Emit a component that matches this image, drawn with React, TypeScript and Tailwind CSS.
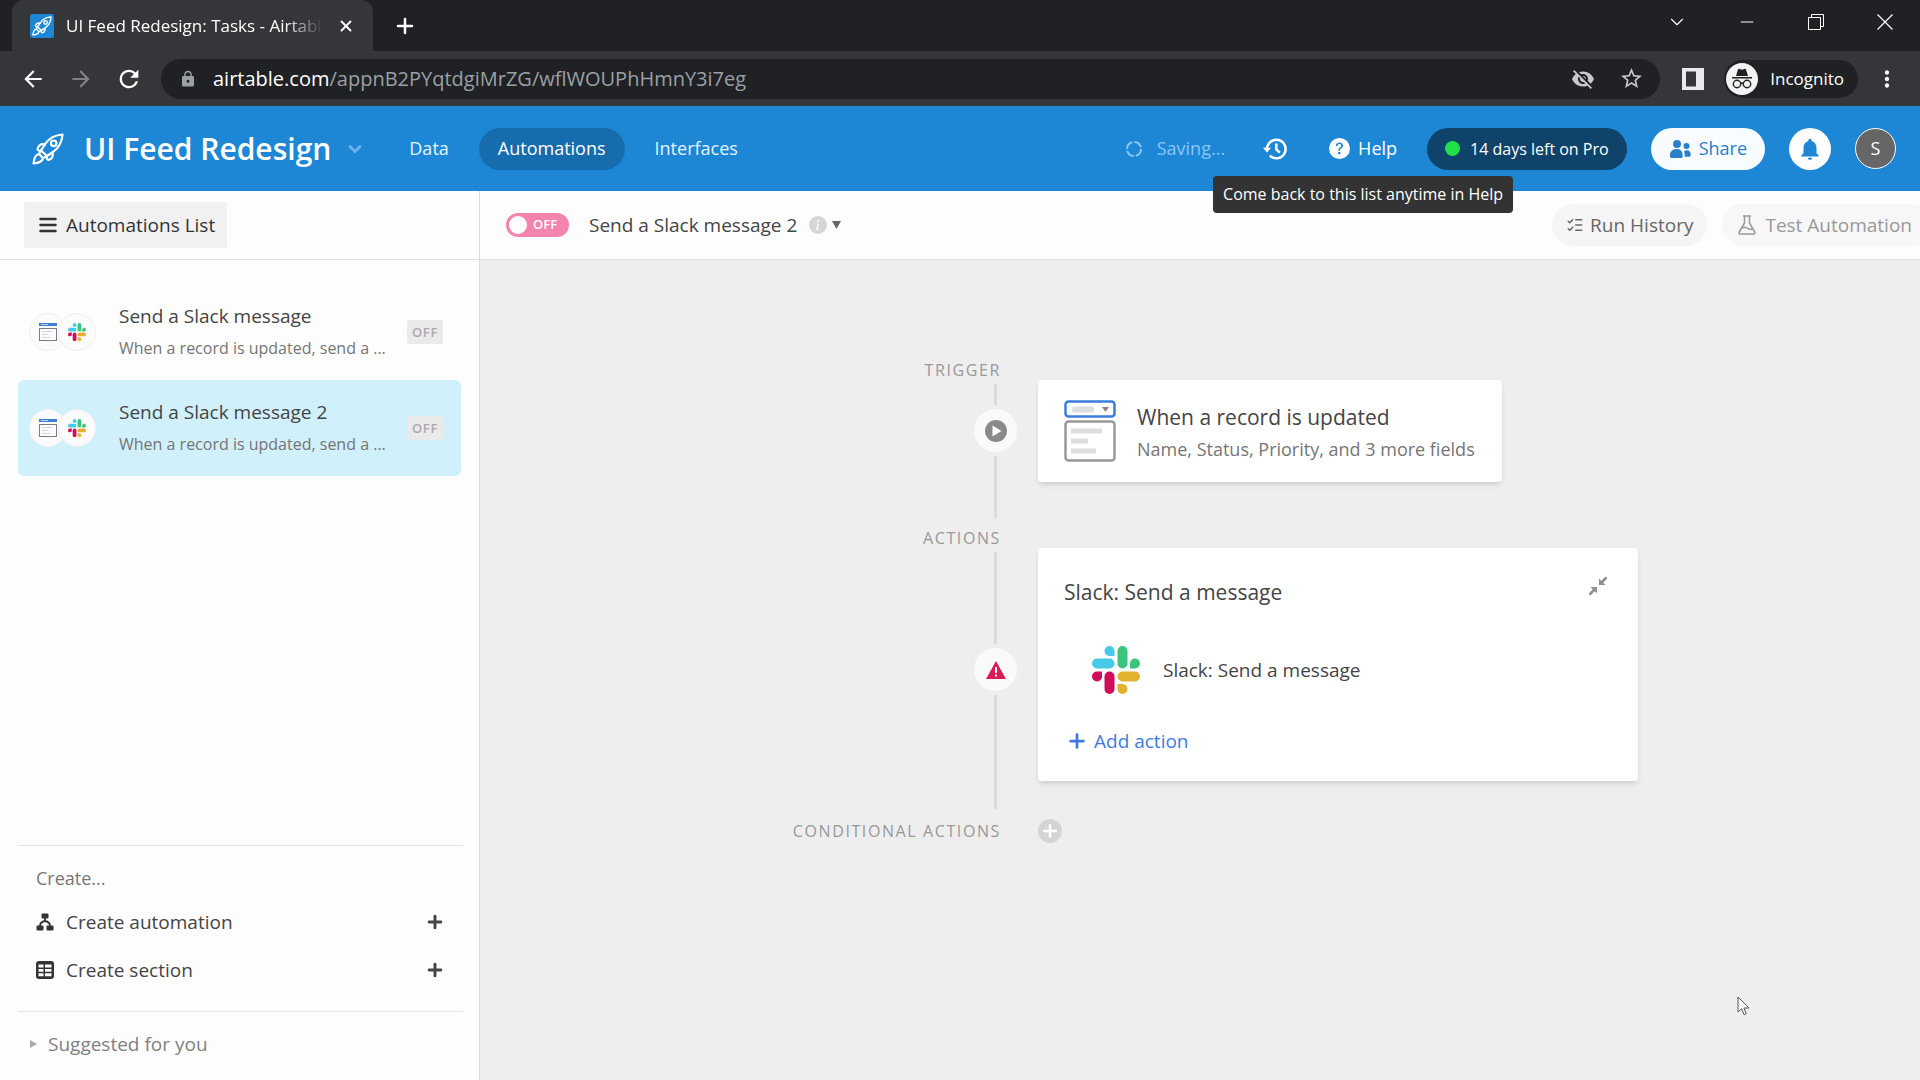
import React, { useState } from 'react';
import {
    MdArrowBack,
    MdArrowForward,
    MdRefresh,
    MdLock,
    MdStarBorder,
    MdVisibilityOff,
    MdMoreVert,
    MdNotifications,
} from 'react-icons/md';
import { BsQuestionCircleFill, BsInfoCircleFill } from 'react-icons/bs';
import { X, Plus, Minus, ChevronDown, ListChecks } from 'lucide-react';

interface Automation {
    id: number;
    name: string;
    description: string;
}

const automations: Automation[] = [
    { id: 1, name: 'Send a Slack message', description: 'When a record is updated, send a ...' },
    { id: 2, name: 'Send a Slack message 2', description: 'When a record is updated, send a ...' },
];

const RocketIcon = ({ className }: { className?: string }) => (
    <svg viewBox="0 0 32 32" className={className} fill="none" stroke="currentColor" strokeWidth="2.2" strokeLinejoin="round" strokeLinecap="round">
        <path d="M30.500 1.500C24 2 17.500 5 13.500 10.500L9 17.500L15 23L21 19C27 15 30 8 30.500 1.500Z" />
        <path d="M13 11.500C9 10.500 6.500 12.500 5.500 16C6 18 8 18 9 17.500M20.500 19.500C21.500 23.500 19.500 26 16.500 27C14.500 26.500 14.500 24.500 15 23" />
        <circle cx="21.700" cy="10.300" r="2.800" />
        <path d="M9 17.500L7 21L11 25L15 23" />
        <path d="M7 21C3 21.500 2 26 1.500 30.500C6 30 10.500 29 11 25" />
    </svg>
);

const SlackLogo = ({ className }: { className?: string }) => (
    <svg viewBox="0 0 48 48" className={className}>
        <g fill="#45cbe8">
            <path d="M17.500 0a5 5 0 0 0 0 10h5V5a5 5 0 0 0-5-5Z" />
            <rect y="12.500" width="22.500" height="10" rx="5" />
        </g>
        <g fill="#3bc47c">
            <rect x="25.500" width="10" height="22.500" rx="5" />
            <path d="M48 17.500a5 5 0 0 0-10 0v5h5a5 5 0 0 0 5-5Z" />
        </g>
        <g fill="#e2b22f">
            <rect x="25.500" y="25.500" width="22.500" height="10" rx="5" />
            <path d="M30.500 48a5 5 0 0 0 0-10h-5v5a5 5 0 0 0 5 5Z" />
        </g>
        <g fill="#cf0d5b">
            <rect x="12.500" y="25.500" width="10" height="22.500" rx="5" />
            <path d="M0 30.500a5 5 0 0 0 10 0v-5H5a5 5 0 0 0-5 5Z" />
        </g>
    </svg>
);

const RecordIcon = ({ className }: { className?: string }) => (
    <svg viewBox="0 0 52 62" className={className} fill="none">
        <rect x="1.500" y="1.500" width="49" height="15" rx="3" stroke="#3b7ddd" strokeWidth="2.500" />
        <rect x="8" y="6.500" width="22" height="6" rx="2" fill="#dedede" />
        <path d="M38 7h7l-3.500 5z" fill="#8d7f80" />
        <rect x="1.500" y="21.500" width="49" height="39" rx="3" stroke="#999" strokeWidth="2.500" />
        <path d="M7 31h31M7 41h17M7 51h25" stroke="#dedede" strokeWidth="5" />
    </svg>
);

const SmallRecordIcon = () => (
    <svg viewBox="0 0 18 18" className="size-[18px]" fill="none">
        <rect width="18" height="3" fill="#3f7fd0" />
        <rect x="2" y="1" width="7" height="1" fill="#bcd3ef" />
        <rect x="0.500" y="5.500" width="17" height="12" stroke="#777b8c" />
        <path d="M3 8.500h10M3 11.500h6M3 14.500h8" stroke="#d5d5d5" />
    </svg>
);

const HistoryIcon = () => (
    <svg viewBox="0 0 24 22" className="h-[22px] w-6" fill="none" stroke="currentColor" strokeWidth="2.500">
        <path d="M4 11a9.300 9.300 0 1 1 2.800 6.700" />
        <path d="M13.300 5.500v6l3.500 3.200" />
        <path d="M0 9.800h8L4 14.500z" fill="currentColor" stroke="none" />
    </svg>
);

const PeopleIcon = () => (
    <svg viewBox="0 0 22 20" className="h-5 w-[22px]" fill="currentColor">
        <circle cx="8" cy="5" r="4" />
        <path d="M8 10C3 10 1 13 1 16v1c0 1 .6 2 2 2h9c1 0 1.600-.600 1.600-1.600V16C13.600 13 12 10 8 10Z" />
        <circle cx="17.500" cy="7" r="3" />
        <path d="M15 12.500c1-.900 2-1.200 3-1.200 2.500 0 3.700 1.900 3.700 4V16c0 1-.6 1.700-1.500 1.700h-4.700C15.800 15.500 15.800 14 15 12.500Z" />
    </svg>
);

const IncognitoIcon = () => (
    <svg viewBox="0 0 32 32" className="size-8">
        <circle cx="16" cy="16" r="16" fill="#f1f3f4" />
        <path d="M12 6.500c.3-.8 1-.8 1.600-.5.900.4 1.700.6 2.400.6s1.500-.2 2.400-.6c.6-.3 1.300-.3 1.600.5L22 13H10Z" fill="#202124" />
        <path d="M6 14h20v1.500H6Z" fill="#202124" />
        <g fill="none" stroke="#202124" strokeWidth="1.400">
            <circle cx="11" cy="21" r="3.700" />
            <circle cx="21" cy="21" r="3.700" />
            <path d="M14.700 20.500q1.300-1 2.600 0" />
        </g>
    </svg>
);

const SitemapIcon = () => (
    <svg viewBox="0 0 18 18" className="size-[18px]" fill="#333">
        <rect x="5.500" y="0.500" width="7" height="5" rx="1" />
        <rect x="0.500" y="12.500" width="7" height="5" rx="1" />
        <rect x="10.500" y="12.500" width="7" height="5" rx="1" />
        <path d="M9 5v3M9 8C6 8.500 4 10 4 13M9 8c3 .5 5 2 5 5" stroke="#333" strokeWidth="1.800" fill="none" />
    </svg>
);

const TableIcon = () => (
    <svg viewBox="0 0 18 18" className="size-[18px]">
        <rect width="18" height="18" rx="3" fill="#333" />
        <path d="M2.500 3.500h5v3h-5zM9 3.500h6.500v3H9zM2.500 8h5v2.700h-5zM9 8h6.500v2.700H9zM2.500 12.300h5v3h-5zM9 12.300h6.500v3H9z" fill="#fff" />
    </svg>
);

const FlaskIcon = () => (
    <svg viewBox="0 0 18 20" className="h-5 w-[18px]" fill="none" stroke="currentColor" strokeWidth="1.500" strokeLinejoin="round">
        <path d="M5 1h8M6.500 1v7L1.200 17c-.5 1 0 2 1 2h13.600c1 0 1.500-1 1-2L11.500 8V1" />
        <path d="M3.500 13.500C6 11.500 8 12 9.500 13.300s3.500 1.200 5.500.2" />
    </svg>
);

const CollapseIcon = () => (
    <svg viewBox="0 0 20 20" className="size-5" fill="#909090">
        <path d="M11 2.500v6.500h6.500l-2.200-2.200L19.500 2.300 17.700.5l-4.500 4.200zM9 17.500V11H2.500l2.200 2.200L.5 17.700l1.800 1.800 4.500-4.200z" />
    </svg>
);

const BrowserChrome = () => (
    <div className="bg-[#202124] text-white">
        <div className="flex h-[51px] items-stretch pl-3">
            <div className="flex w-[361px] items-center rounded-t-xl bg-[#35363a] px-[18px]">
                <span className="flex h-6 w-6 shrink-0 items-center justify-center rounded-xs bg-[#1d87d6]">
                    <RocketIcon className="size-5" />
                </span>
                <span className="mr-[14px] ml-3 min-w-0 flex-1 overflow-hidden whitespace-nowrap mask-r-from-85% text-[17px]">
                    UI Feed Redesign: Tasks - Airtable
                </span>
                <button aria-label="Close tab" className="shrink-0">
                    <X size={18} strokeWidth={2.5} />
                </button>
            </div>
            <button aria-label="New tab" className="ml-5">
                <Plus size={24} strokeWidth={2.5} />
            </button>
            <div className="ml-auto flex items-center gap-[49px] pr-[25px] pb-2">
                <button aria-label="Search tabs"><ChevronDown size={22} strokeWidth={1.2} /></button>
                <button aria-label="Minimize"><Minus size={20} strokeWidth={1.2} /></button>
                <button aria-label="Restore" className="flex w-5 justify-center">
                    <svg viewBox="0 0 16 16" className="size-4" fill="none" stroke="currentColor">
                        <path d="M.5 3.500h12v12H.5zM3.500 3.500V.5h12v12h-3" />
                    </svg>
                </button>
                <button aria-label="Close window" className="flex w-5 justify-center">
                    <svg viewBox="0 0 16 16" className="size-4" stroke="currentColor" strokeWidth="1.200">
                        <path d="M.5.5l15 15M15.500.5l-15 15" />
                    </svg>
                </button>
            </div>
        </div>
        <div className="flex h-[55px] items-center bg-[#35363a] pl-5">
            <button aria-label="Back"><MdArrowBack size={26} /></button>
            <button aria-label="Forward" className="ml-[22px] text-[#818286]"><MdArrowForward size={26} /></button>
            <button aria-label="Reload" className="ml-[21px]"><MdRefresh size={28} /></button>
            <div className="ml-[18px] flex h-10 flex-1 items-center rounded-full bg-[#202124] pr-4 pl-[18px]">
                <MdLock size={18} className="text-[#9aa0a6]" />
                <div className="ml-4 flex-1 text-[20px] text-[#9aa0a6]">
                    <span className="text-white">airtable.com</span>/appnB2PYqtdgiMrZG/wflWOUPhHmnY3i7eg
                </div>
                <button aria-label="Third-party cookies blocked" className="text-[#c6c8cb]"><MdVisibilityOff size={24} /></button>
                <button aria-label="Bookmark" className="ml-6 text-[#c6c8cb]"><MdStarBorder size={25} /></button>
            </div>
            <button aria-label="Side panel" className="ml-[22px]">
                <svg viewBox="0 0 22 22" className="size-[22px]">
                    <path d="M0 0h22v22H0zM4 3.500v15h10v-15z" fill="#e8eaed" fillRule="evenodd" />
                </svg>
            </button>
            <div className="ml-5 flex h-[38px] items-center rounded-full bg-[#202124] pr-[14px] pl-[2px]">
                <IncognitoIcon />
                <span className="ml-3 text-[17px]">Incognito</span>
            </div>
            <button aria-label="Menu" className="mr-5 ml-4"><MdMoreVert size={26} /></button>
        </div>
    </div>
);

const Header = () => (
    <header className="flex h-[85px] items-center bg-[#1d87d6] pr-6 pl-8 text-white">
        <RocketIcon className="size-8" />
        <h1 className="ml-5 text-[30px] font-semibold whitespace-nowrap">UI Feed Redesign</h1>
        <ChevronDown size={20} strokeWidth={3.5} className="ml-[14px] text-[#6bb3ea]" />
        <nav className="ml-[26px] flex items-center text-[18px]">
            <a href="#data" className="px-[18px] text-[#e3f4ff]">Data</a>
            <a href="#automations" className="ml-3 flex h-[42px] items-center rounded-full bg-[#176cad] px-[19px]">Automations</a>
            <a href="#interfaces" className="ml-3 px-[18px] text-[#e3f4ff]">Interfaces</a>
        </nav>
        <div className="ml-auto flex items-center whitespace-nowrap">
            <svg viewBox="0 0 18 18" className="size-[18px]" fill="none">
                <circle cx="9" cy="9" r="7" stroke="#8ac6f2" strokeWidth="2" strokeDasharray="9 2" />
            </svg>
            <span className="ml-[14px] text-[18px] text-[#8ac6f2]">Saving...</span>
            <button aria-label="History" className="ml-[38px]"><HistoryIcon /></button>
            <div className="relative ml-[42px]">
                <button className="flex items-center gap-2 text-[18px]">
                    <BsQuestionCircleFill size={21} />
                    Help
                </button>
                <div role="tooltip" className="absolute top-[41px] left-1/2 z-10 -translate-x-1/2 rounded-sm bg-[#333] px-[10px] py-2 text-[16px] leading-[21px]">
                    Come back to this list anytime in Help
                </div>
            </div>
            <button className="ml-[30px] flex h-[42px] items-center gap-[10px] rounded-full bg-[#0f4369] px-[18px] text-[16px]">
                <span className="size-[15px] rounded-full bg-[#20e04a]" />
                14 days left on Pro
            </button>
            <button className="ml-6 flex h-[42px] items-center gap-2 rounded-full bg-[#f8fcff] px-[18px] text-[18px] text-[#2a7fc9]">
                <PeopleIcon />
                Share
            </button>
            <button aria-label="Notifications" className="ml-6 flex size-[42px] items-center justify-center rounded-full bg-white text-[#1d87d6]">
                <MdNotifications size={26} />
            </button>
            <button className="ml-6 flex size-[41px] items-center justify-center rounded-full border border-white bg-[#666] text-[18px]">S</button>
        </div>
    </header>
);

interface SidebarProps {
    selected: number;
    onSelect: (id: number) => void;
}

const Sidebar: React.FC<SidebarProps> = ({ selected, onSelect }) => (
    <aside className="flex w-[480px] shrink-0 flex-col border-r border-[#dcdcdc] bg-[#fdfdfd] text-[#444]">
        <div className="flex h-[69px] items-center border-b border-[#dedede] pl-6">
            <button className="flex h-[46px] items-center gap-[9px] rounded-xs bg-[#f1f1f1] pr-3 pl-[15px] text-[19px] text-[#333]">
                <svg viewBox="0 0 18 16" className="h-4 w-[18px]" stroke="currentColor" strokeWidth="2.500" strokeLinecap="round">
                    <path d="M1.500 2h15M1.500 8h15M1.500 14h15" />
                </svg>
                Automations List
            </button>
        </div>
        <ul className="px-[18px] pt-6">
            {automations.map((automation) => (
                <li key={automation.id}>
                    <button
                        onClick={() => onSelect(automation.id)}
                        className={`flex h-24 w-full items-center rounded-md pr-[18px] pl-[11px] text-left ${
                            selected === automation.id ? 'bg-[#d0f0fb]' : ''
                        }`}
                    >
                        <span className="flex">
                            <span className="flex size-[38px] items-center justify-center rounded-full border border-[#f0f0f0] bg-[#fbfbfb]">
                                <SmallRecordIcon />
                            </span>
                            <span className="-ml-[9px] flex size-[38px] items-center justify-center rounded-full border border-[#f0f0f0] bg-[#fbfbfb]">
                                <SlackLogo className="size-[18px]" />
                            </span>
                        </span>
                        <span className="ml-[23px] w-[276px] shrink-0">
                            <span className="block text-[19px] leading-8">{automation.name}</span>
                            <span className="block text-[16px] leading-8 whitespace-nowrap text-[#757575]">{automation.description}</span>
                        </span>
                        <span className="ml-auto rounded-xs bg-[#eaeaea] px-[5px] text-[13px] leading-6 font-semibold tracking-wider text-[#aaa]">OFF</span>
                    </button>
                </li>
            ))}
        </ul>
        <div className="mt-auto pr-4 pl-[18px]">
            <div className="border-t border-[#e4e4e4] px-[18px] pt-4 pb-[17px]">
                <p className="text-[18px] leading-8 text-[#777]">Create...</p>
                <button className="mt-1 flex h-12 w-full items-center gap-3 text-[19px]">
                    <SitemapIcon />
                    Create automation
                    <Plus size={20} strokeWidth={3.5} className="ml-auto" />
                </button>
                <button className="flex h-12 w-full items-center gap-3 text-[19px]">
                    <TableIcon />
                    Create section
                    <Plus size={20} strokeWidth={3.5} className="ml-auto" />
                </button>
            </div>
            <button className="flex h-[69px] w-full items-center gap-[11px] border-t border-[#e4e4e4] pb-1 pl-3 text-[19px] text-[#808080]">
                <svg viewBox="0 0 7 8" className="h-2 w-[7px]" fill="#aaa"><path d="M0 0l7 4-7 4z" /></svg>
                Suggested for you
            </button>
        </div>
    </aside>
);

const Toolbar = () => {
    const [enabled, setEnabled] = useState(false);

    return (
        <div className="flex h-[69px] shrink-0 items-center overflow-hidden border-b border-[#dedede] bg-[#fdfdfd] pl-[26px] whitespace-nowrap">
            <button
                role="switch"
                aria-checked={enabled}
                onClick={() => setEnabled(!enabled)}
                className="flex h-6 w-[63px] items-center gap-[6px] rounded-full bg-[#f284ad] px-[3px] text-[13px] font-semibold text-white"
            >
                <span className="size-[18px] rounded-full bg-white" />
                {enabled ? 'ON' : 'OFF'}
            </button>
            <h2 className="ml-5 text-[19px] text-[#444]">Send a Slack message 2</h2>
            <BsInfoCircleFill size={18} className="ml-3 text-[#d6d6d6]" />
            <svg viewBox="0 0 9 8" className="ml-[5px] h-2 w-[9px]" fill="#666"><path d="M0 0h9L4.500 8z" /></svg>
            <button className="ml-auto flex h-[42px] shrink-0 items-center gap-[6px] rounded-full bg-[#f6f5f6] px-[14px] text-[19px] text-[#666]">
                <ListChecks size={18} />
                Run History
            </button>
            <button className="-mr-3 ml-[15px] flex h-[42px] shrink-0 items-center gap-[9px] rounded-full bg-[#f8f7f8] pr-5 pl-4 text-[19px] text-[#999]">
                <FlaskIcon />
                Test Automation
            </button>
        </div>
    );
};

interface StepProps {
    label: string;
    icon: React.ReactNode;
    topLine: string;
    children: React.ReactNode;
}

const Step: React.FC<StepProps> = ({ label, icon, topLine, children }) => (
    <section className="flex gap-[21px]">
        <div className="flex w-[255px] shrink-0 flex-col items-end">
            <h3 className="mb-1 pr-4 text-[16px] leading-5 font-medium tracking-widest text-[#999]">{label}</h3>
            <div className={`mr-5 w-[3px] bg-[#dcdcdc] ${topLine}`} />
            <div className="my-1 flex size-[43px] items-center justify-center rounded-full bg-[#fafafa]">{icon}</div>
            <div className="mr-5 mb-[10px] w-[3px] flex-1 bg-[#dcdcdc]" />
        </div>
        <div className="pt-5">{children}</div>
    </section>
);

const Canvas = () => (
    <main className="relative flex-1 bg-[#eee] pt-[100px] pb-[100px]">
        <div className="mx-auto w-[876px]">
            <Step
                label="TRIGGER"
                topLine="h-[21px]"
                icon={
                    <svg viewBox="0 0 22 22" className="size-[22px]">
                        <circle cx="11" cy="11" r="11" fill="#8a8a8a" />
                        <path d="M7.500 5.500L16.500 11l-9 5.500z" fill="#fff" />
                    </svg>
                }
            >
                <div className="mb-[46px] flex h-[102px] w-[464px] items-center rounded-sm bg-white pl-[26px] whitespace-nowrap shadow-md">
                    <RecordIcon className="h-[62px] w-[52px]" />
                    <div className="ml-[21px] pt-1">
                        <p className="text-[21px] leading-8 text-[#444]">When a record is updated</p>
                        <p className="text-[18px] leading-8 text-[#757575]">Name, Status, Priority, and 3 more fields</p>
                    </div>
                </div>
            </Step>
            <Step
                label="ACTIONS"
                topLine="h-[92px]"
                icon={
                    <svg viewBox="0 0 20 18" className="h-[18px] w-5">
                        <path d="M10 0l10 18H0z" fill="#dc1a56" />
                        <path d="M9 6h2v6H9zM9 13.500h2v2H9z" fill="#fff" />
                    </svg>
                }
            >
                <div className="mb-[38px] h-[233px] w-[600px] rounded-sm bg-white pt-7 pr-[30px] pl-[26px] text-[#444] shadow-md">
                    <div className="flex items-start justify-between">
                        <h4 className="text-[21px] leading-8">Slack: Send a message</h4>
                        <button aria-label="Collapse"><CollapseIcon /></button>
                    </div>
                    <div className="mt-[38px] flex items-center pl-7">
                        <SlackLogo className="size-12" />
                        <span className="ml-[23px] text-[19px]">Slack: Send a message</span>
                    </div>
                    <button className="mt-[31px] flex items-center gap-[6px] pl-[2px] text-[19px] leading-8 text-[#3d7be0]">
                        <Plus size={22} strokeWidth={3} />
                        Add action
                    </button>
                </div>
            </Step>
            <section className="flex items-center gap-[37px]">
                <h3 className="w-[239px] shrink-0 text-right text-[16px] leading-5 font-medium tracking-widest text-[#999]">CONDITIONAL ACTIONS</h3>
                <button aria-label="Add conditional action" className="flex size-6 items-center justify-center rounded-full bg-[#d4d4d4] text-white">
                    <Plus size={20} strokeWidth={3} />
                </button>
            </section>
        </div>
        <svg viewBox="0 0 13 20" className="absolute right-[170px] bottom-[64px] h-5 w-[13px]">
            <path d="M1 1v15l3.500-3.300 2.600 6 2.200-1-2.500-5.700H12z" fill="#fff" stroke="#555" />
        </svg>
    </main>
);

const App: React.FC = () => {
    const [selected, setSelected] = useState(2);

    return (
        <div className="flex min-h-screen flex-col overflow-x-hidden bg-[#eee] font-['Open_Sans','Noto_Sans',sans-serif]">
            <BrowserChrome />
            <Header />
            <div className="flex flex-1">
                <Sidebar selected={selected} onSelect={setSelected} />
                <div className="flex min-w-0 flex-1 flex-col">
                    <Toolbar />
                    <Canvas />
                </div>
            </div>
        </div>
    );
};

export default App;
